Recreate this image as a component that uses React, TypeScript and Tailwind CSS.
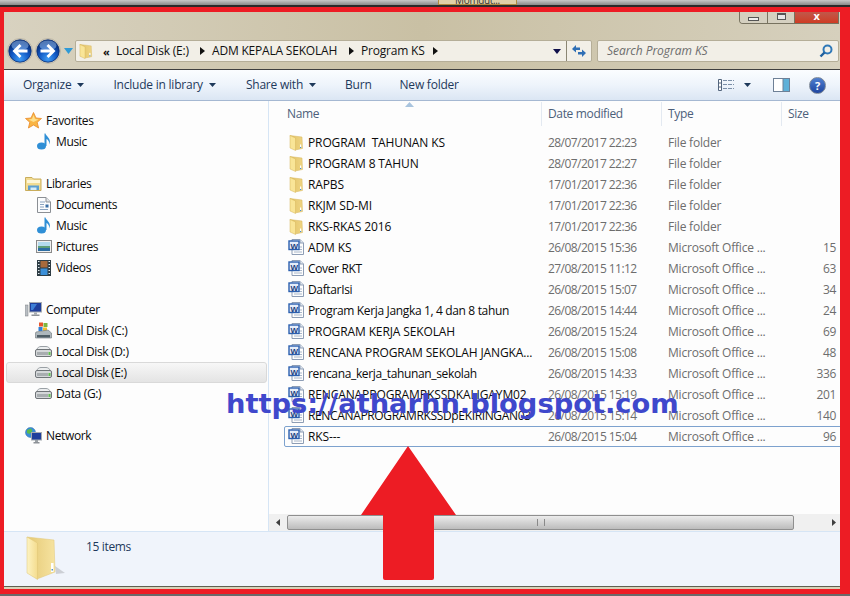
import { ReactNode } from 'react';

type FileRow = { name: string; date: string; type: string; size: string; folder?: boolean; selected?: boolean };

const files: FileRow[] = [
  { name: 'PROGRAM  TAHUNAN KS', date: '28/07/2017 22:23', type: 'File folder', size: '', folder: true },
  { name: 'PROGRAM 8 TAHUN', date: '28/07/2017 22:27', type: 'File folder', size: '', folder: true },
  { name: 'RAPBS', date: '17/01/2017 22:36', type: 'File folder', size: '', folder: true },
  { name: 'RKJM SD-MI', date: '17/01/2017 22:36', type: 'File folder', size: '', folder: true },
  { name: 'RKS-RKAS 2016', date: '17/01/2017 22:36', type: 'File folder', size: '', folder: true },
  { name: 'ADM KS', date: '26/08/2015 15:36', type: 'Microsoft Office ...', size: '15' },
  { name: 'Cover RKT', date: '27/08/2015 11:12', type: 'Microsoft Office ...', size: '63' },
  { name: 'DaftarIsi', date: '26/08/2015 15:07', type: 'Microsoft Office ...', size: '34' },
  { name: 'Program Kerja Jangka 1, 4 dan 8 tahun', date: '26/08/2015 14:44', type: 'Microsoft Office ...', size: '24' },
  { name: 'PROGRAM KERJA SEKOLAH', date: '26/08/2015 15:24', type: 'Microsoft Office ...', size: '69' },
  { name: 'RENCANA PROGRAM SEKOLAH JANGKA...', date: '26/08/2015 15:08', type: 'Microsoft Office ...', size: '48' },
  { name: 'rencana_kerja_tahunan_sekolah', date: '26/08/2015 14:33', type: 'Microsoft Office ...', size: '336' },
  { name: 'RENCANAPROGRAMRKSSDKALIGAYM02', date: '26/08/2015 15:19', type: 'Microsoft Office ...', size: '201' },
  { name: 'RENCANAPROGRAMRKSSDpEKIRINGAN03', date: '26/08/2015 15:14', type: 'Microsoft Office ...', size: '140' },
  { name: 'RKS---', date: '26/08/2015 15:04', type: 'Microsoft Office ...', size: '96', selected: true },
];

function FolderIcon({ size = 16 }: { size?: number }) {
  return (
    <svg width={size} height={size} viewBox="0 0 16 16">
      <defs>
        <linearGradient id="folderBack" x1="0" y1="0" x2="1" y2="0">
          <stop offset="0" stopColor="#e2c266" />
          <stop offset="1" stopColor="#efd583" />
        </linearGradient>
      </defs>
      <path d="M1 0.5 L13 2 L13.5 13.5 L6 15 Z" fill="url(#folderBack)" stroke="#d6b65c" strokeWidth="0.5" />
      <path d="M1 0.5 L6.5 3 V15.5 L1 13 Z" fill="#f9e597" stroke="#d6b65c" strokeWidth="0.5" />
      <rect x="11" y="9.5" width="1.2" height="3.5" fill="#fff" />
      <rect x="11" y="12" width="1.2" height="1" fill="#4a90d0" />
    </svg>
  );
}

function BigFolder() {
  return (
    <svg width="44" height="45" viewBox="0 0 44 45">
      <defs>
        <linearGradient id="bigBack" x1="0" y1="0" x2="1" y2="0">
          <stop offset="0" stopColor="#e5c975" />
          <stop offset="1" stopColor="#f6e3a0" />
        </linearGradient>
        <linearGradient id="bigFlap" x1="0" y1="0" x2="1" y2="0">
          <stop offset="0" stopColor="#fdf3c2" />
          <stop offset="1" stopColor="#f4dc8e" />
        </linearGradient>
      </defs>
      <path d="M29 30 L39 37 L30 38 Z" fill="#000" opacity="0.15" />
      <path d="M1 1 L28 4 L29 36 L11 43 Z" fill="url(#bigBack)" stroke="#e0c778" strokeWidth="0.5" />
      <path d="M1 1 L11.5 7 V43.5 L1 37 Z" fill="url(#bigFlap)" stroke="#dfc475" strokeWidth="0.5" />
      <rect x="25" y="27" width="2.5" height="9" fill="#fff" />
      <rect x="25.5" y="33" width="1.5" height="1.5" fill="#4a90d0" />
    </svg>
  );
}

function WordIcon() {
  return (
    <svg width="17" height="17" viewBox="0 0 17 17">
      <path d="M4 0.5 H12 L15.5 4 V15.5 H4 Z" fill="#fdfdfd" stroke="#8d9db5" />
      <path d="M12 0.5 V4 H15.5" fill="#dfe6ef" stroke="#8d9db5" />
      <path d="M11 8 H14 M11 10.5 H14 M6 13 H14" stroke="#a8b6c9" />
      <rect x="1" y="2" width="10" height="8.5" fill="#e6eefa" stroke="#2b5fae" strokeWidth="1.4" />
      <text x="6" y="9.5" fontSize="8" fontWeight="700" textAnchor="middle" fill="#1c3f80" fontFamily="Liberation Sans, sans-serif">W</text>
    </svg>
  );
}

function StarIcon() {
  return (
    <svg width="17" height="17" viewBox="0 0 17 17">
      <path d="M8.5 0.5 L11 6 L16.5 6.5 L12.2 10.3 L13.6 16 L8.5 13 L3.4 16 L4.8 10.3 L0.5 6.5 L6 6 Z" fill="#f9b544" stroke="#e98a2a" strokeWidth="0.8" />
      <path d="M8.5 3 L10 7 L13.5 7.5 L8.5 10 L3.5 7.5 L7 7 Z" fill="#fde08d" />
    </svg>
  );
}

function MusicIcon() {
  return (
    <svg width="14" height="17" viewBox="0 0 14 17">
      <ellipse cx="4.5" cy="13" rx="4.5" ry="3.6" fill="#2f8fd6" />
      <path d="M7.5 13 V0.5 H8.5 C9 3.5 14.5 5 12.5 11.5 C12.5 8 10.5 6.5 9.5 6 V13 Z" fill="#2f8fd6" />
    </svg>
  );
}

function LibraryIcon() {
  return (
    <svg width="17" height="15" viewBox="0 0 17 15">
      <path d="M0.5 1.5 H7 L8.5 3 H16 V14.5 H0.5 Z" fill="#f2dc92" stroke="#c9ad5c" />
      <rect x="2" y="4" width="13" height="3" fill="#fdf6d8" />
      <path d="M3 14 V9.5 H14 V14 Z" fill="#5d9fd0" />
      <path d="M5.5 14 V11.5 H11.5 V14 Z" fill="#d6ecf8" />
    </svg>
  );
}

function DocIcon() {
  return (
    <svg width="14" height="16" viewBox="0 0 14 16">
      <path d="M0.5 0.5 H9 L13.5 5 V15.5 H0.5 Z" fill="#fbfcfd" stroke="#8b8f94" />
      <path d="M9 0.5 V5 H13.5" fill="#e2e6ea" stroke="#8b8f94" />
      <path d="M3 5 H8 M3 7.5 H7 M3 10 H7 M3 12.5 H11" stroke="#8aa3bf" />
      <rect x="8.5" y="7.5" width="3" height="3" fill="#3b6ea5" />
    </svg>
  );
}

function PicturesIcon() {
  return (
    <svg width="16" height="13" viewBox="0 0 16 13">
      <rect x="0.5" y="0.5" width="15" height="12" fill="#f0f0f0" stroke="#8a8a8a" />
      <rect x="2" y="2" width="12" height="4" fill="#b4dbee" />
      <rect x="2" y="6" width="12" height="2" fill="#5f9f78" />
      <rect x="2" y="8" width="12" height="3" fill="#2d6ea3" />
    </svg>
  );
}

function VideosIcon() {
  return (
    <svg width="14" height="16" viewBox="0 0 14 16">
      <rect width="14" height="16" fill="#2f3d45" />
      <path d="M1 1.5 H2.5 M1 4.5 H2.5 M1 7.5 H2.5 M1 10.5 H2.5 M1 13.5 H2.5 M11.5 1.5 H13 M11.5 4.5 H13 M11.5 7.5 H13 M11.5 10.5 H13 M11.5 13.5 H13" stroke="#dfe9ee" />
      <rect x="3.5" y="1" width="7" height="6.5" fill="#a86a3c" />
      <rect x="3.5" y="8.5" width="7" height="6.5" fill="#3b8fd8" />
    </svg>
  );
}

function ComputerIcon() {
  return (
    <svg width="17" height="15" viewBox="0 0 17 15">
      <rect x="0" y="3" width="3" height="11" fill="#b9bec3" stroke="#7b8085" strokeWidth="0.5" />
      <rect x="4.5" y="0.5" width="12" height="9.5" fill="#1f3f9c" stroke="#a6abb0" />
      <path d="M6 2 H12 L8 8 H6 Z" fill="#3d7fd6" />
      <rect x="9" y="10.5" width="3" height="2" fill="#a6abb0" />
      <rect x="6.5" y="12.5" width="8" height="1.5" fill="#8d9297" />
    </svg>
  );
}

function DriveIcon() {
  return (
    <svg width="17" height="11" viewBox="0 0 17 11">
      <path d="M2 3.5 C2.5 1.5 4 0.5 6 0.5 H11 C13 0.5 14.5 1.5 15 3.5 Z" fill="#eceeef" stroke="#9aa0a5" />
      <rect x="0.5" y="3.5" width="16" height="7" rx="1.5" fill="#d4d7d9" stroke="#6f7478" />
      <rect x="2" y="6" width="11" height="3" fill="#a8adb0" />
      <rect x="13.5" y="6" width="2" height="3" fill="#5fc04d" />
    </svg>
  );
}

function SystemDriveIcon() {
  return (
    <svg width="17" height="17" viewBox="0 0 17 17">
      <rect x="4" y="0.5" width="4" height="4" fill="#e8562d" />
      <rect x="8.5" y="1" width="4" height="4" fill="#7fb53f" />
      <rect x="3.5" y="5" width="4" height="4" fill="#2f7fd6" />
      <rect x="8" y="5.5" width="4" height="4" fill="#f5c02c" />
      <path d="M1 10 L13 8 L16.5 11 V16 H0.5 V11 Z" fill="#aeb8bd" stroke="#6c7478" strokeWidth="0.6" />
      <rect x="2" y="13" width="13" height="2.5" fill="#4f5e66" />
    </svg>
  );
}

function NetworkIcon() {
  return (
    <svg width="17" height="17" viewBox="0 0 17 17">
      <circle cx="5.5" cy="5.5" r="5" fill="#3a8fd8" stroke="#2a6aa8" strokeWidth="0.5" />
      <path d="M2 3 L6 1.5 L7.5 4 L4.5 7 L2 6 Z" fill="#5cbb4c" />
      <rect x="6.5" y="5.5" width="10" height="7.5" fill="#1f3f9c" stroke="#a6abb0" />
      <rect x="10" y="13" width="3" height="2" fill="#9aa0a5" />
      <rect x="8.5" y="15" width="6" height="1.5" fill="#8d9297" />
    </svg>
  );
}

function NavRow({ icon, label, top, selected }: { icon: ReactNode; label: string; top?: boolean; selected?: boolean }) {
  return (
    <div
      className={`h-[21px] flex items-center text-[12px] text-[#0b0b0b] ${top ? 'pl-[21px]' : 'pl-[31px]'} ${
        selected ? 'ml-[2px] mr-[1px] rounded-[3px] border border-[#d9d9d9] bg-linear-to-b from-[#f7f7f7] to-[#e4e4e4]' : ''
      }`}
    >
      <span className={`flex items-center justify-center shrink-0 w-[17px] mr-[4px] ${selected ? '-ml-[3px]' : ''}`}>{icon}</span>
      <span>{label}</span>
    </div>
  );
}

function Sidebar() {
  return (
    <div className="w-[265px] shrink-0 border-r border-[#d6e5f5] pt-[9px] bg-[#fdfdfd]">
      <NavRow top icon={<StarIcon />} label="Favorites" />
      <NavRow icon={<MusicIcon />} label="Music" />
      <div className="h-[21px]" />
      <NavRow top icon={<LibraryIcon />} label="Libraries" />
      <NavRow icon={<DocIcon />} label="Documents" />
      <NavRow icon={<MusicIcon />} label="Music" />
      <NavRow icon={<PicturesIcon />} label="Pictures" />
      <NavRow icon={<VideosIcon />} label="Videos" />
      <div className="h-[21px]" />
      <NavRow top icon={<ComputerIcon />} label="Computer" />
      <NavRow icon={<SystemDriveIcon />} label="Local Disk (C:)" />
      <NavRow icon={<DriveIcon />} label="Local Disk (D:)" />
      <NavRow selected icon={<DriveIcon />} label="Local Disk (E:)" />
      <NavRow icon={<DriveIcon />} label="Data (G:)" />
      <div className="h-[21px]" />
      <NavRow top icon={<NetworkIcon />} label="Network" />
    </div>
  );
}

function HeaderCell({ label, width }: { label: string; width: string }) {
  return (
    <div className={`${width} shrink-0 h-[24px] pl-[6px] flex items-center border-r border-[#e3e9f1] text-[12px] text-[#4c607a]`}>
      {label}
    </div>
  );
}

function FileList() {
  return (
    <div className="flex-1 min-w-0 flex flex-col bg-[#fdfdfd] overflow-hidden relative">
      <div className="flex pl-[12px] h-[31px] items-start pt-[1px]">
        <HeaderCell label="Name" width="w-[261px]" />
        <HeaderCell label="Date modified" width="w-[120px]" />
        <HeaderCell label="Type" width="w-[120px]" />
        <div className="pl-[6px] h-[24px] flex items-center text-[12px] text-[#4c607a]">Size</div>
      </div>
      <svg width="9" height="5" viewBox="0 0 9 5" className="absolute left-[136px] top-[1px]">
        <path d="M4.5 0 L9 5 H0 Z" fill="#a9c4de" />
      </svg>
      <div className="flex-1 pl-[15px]">
        {files.map((f) => (
          <div
            key={f.name}
            className={`h-[21px] flex items-center text-[12px] w-[560px] ${
              f.selected ? 'border border-[#7da2ce] rounded-[2px]' : ''
            }`}
          >
            <span className={`w-[19px] mr-[1px] shrink-0 flex items-center justify-center ${f.selected ? 'ml-[2px]' : 'ml-[3px]'}`}>
              {f.folder ? <FolderIcon /> : <WordIcon />}
            </span>
            <span
              className={`w-[241px] shrink-0 pl-[1px] text-[#0b0b0b] whitespace-pre overflow-hidden ${
                f.name === f.name.toUpperCase() ? 'tracking-[-0.12px]' : 'tracking-[-0.35px]'
              }`}
            >
              {f.name}
            </span>
            <span className="w-[120px] shrink-0 text-[#6d6d6d] tracking-[-0.55px]">{f.date}</span>
            <span className="w-[120px] shrink-0 text-[#6d6d6d] tracking-[-0.2px]">{f.type}</span>
            <span className="w-[48px] shrink-0 text-right text-[#6d6d6d]">{f.size}</span>
          </div>
        ))}
      </div>
      <div className="h-[17px] flex bg-[#f0f0f0] items-center shrink-0">
        <div className="w-[18px] flex items-center justify-center">
          <svg width="4" height="7" viewBox="0 0 4 7"><path d="M4 0 V7 L0 3.5 Z" fill="#404040" /></svg>
        </div>
        <div className="w-[507px] h-[15px] rounded-[2px] border border-[#8f8f8f] bg-linear-to-b from-[#ececec] to-[#bcbcbc] flex items-center justify-center">
          <span className="w-[8px] h-[7px] border-x border-[#8a8a8a]" />
        </div>
        <div className="flex-1 flex items-center justify-end pr-[4px]">
          <svg width="4" height="7" viewBox="0 0 4 7"><path d="M0 0 V7 L4 3.5 Z" fill="#404040" /></svg>
        </div>
      </div>
    </div>
  );
}

function Crumb({ label, width }: { label: string; width: string }) {
  return (
    <div className={`${width} flex items-center shrink-0`}>
      <span className="text-[12px] text-[#111] tracking-[-0.2px]">{label}</span>
      <svg width="5" height="8" viewBox="0 0 5 8" className="ml-auto mr-[7px]"><path d="M0 0 L5 4 L0 8 Z" fill="#111" /></svg>
    </div>
  );
}

function NavButton({ dir }: { dir: 'back' | 'forward' }) {
  return (
    <svg width="26" height="26" viewBox="0 0 26 26" className="shrink-0">
      <defs>
        <radialGradient id="navFill" cx="0.5" cy="0.85" r="0.75">
          <stop offset="0" stopColor="#3f9cf5" />
          <stop offset="0.55" stopColor="#0f56c2" />
          <stop offset="1" stopColor="#06296f" />
        </radialGradient>
      </defs>
      <circle cx="13" cy="13" r="12.5" fill="#d9d4c4" stroke="#a7a393" strokeWidth="0.6" />
      <circle cx="13" cy="13" r="11.2" fill="url(#navFill)" stroke="#0a2f73" strokeWidth="0.8" />
      <ellipse cx="13" cy="7.5" rx="8.5" ry="5" fill="#8fbcf0" opacity="0.55" />
      <g transform={dir === 'forward' ? 'rotate(180 13 13)' : undefined}>
        <path d="M12.5 6 L5.5 13 L12.5 20 L14.5 18 L11 14.5 H20.5 V11.5 H11 L14.5 8 Z" fill="#fff" />
      </g>
    </svg>
  );
}

function WindowChrome() {
  return (
    <div className="h-[58px] shrink-0 bg-linear-to-r from-[#d8d2c0] via-[#c9c0a4] to-[#d6d0bd] border-b border-[#3f3f3f]">
      <div className="h-[12px] flex justify-end">
        <div className="flex w-[100px] h-[12px] mr-[1px] rounded-bl-[4px] border border-t-0 border-[#77725f] overflow-hidden">
          <div className="w-[28px] border-r border-[#77725f] bg-[#d5d0c0] flex items-center justify-center">
            <span className="w-[11px] h-[4px] mt-[3px] bg-[#eee] border border-[#555]" />
          </div>
          <div className="w-[27px] border-r border-[#77725f] bg-[#d5d0c0] flex items-center justify-center">
            <span className="w-[9px] h-[7px] -mt-[3px] border border-[#555] border-t-2 bg-[#e8e8e8]" />
          </div>
          <div className="flex-1 bg-linear-to-b from-[#c0584a] to-[#cf3b22] flex items-start justify-center">
            <span className="text-[11px] leading-[8px] font-bold text-white">x</span>
          </div>
        </div>
      </div>
      <div className="h-[15px]" />
      <div className="h-[24px] flex items-center pl-[3px]">
        <NavButton dir="back" />
        <div className="w-[2px]" />
        <NavButton dir="forward" />
        <svg width="9" height="6" viewBox="0 0 9 6" className="ml-[3px] mr-[2px] shrink-0"><path d="M0 0 H9 L4.5 6 Z" fill="#2f9ad6" /></svg>
        <div className="w-[517px] h-[22px] shrink-0 flex items-center bg-[#f2efe7] border border-[#b5ae98] rounded-[2px] pl-[3px]">
          <FolderIcon size={15} />
          <span className="text-[11px] ml-[9px] w-[13px] font-bold leading-none text-[#111]">«</span>
          <Crumb label="Local Disk (E:)" width="w-[96px]" />
          <Crumb label="ADM KEPALA SEKOLAH" width="w-[149px]" />
          <Crumb label="Program KS" width="w-[84px]" />
          <div className="flex-1" />
          <svg width="8" height="5" viewBox="0 0 8 5" className="mr-[5px]"><path d="M0 0 H8 L4 5 Z" fill="#10104a" /></svg>
          <div className="w-[25px] h-full border-l border-[#8b8673] flex items-center justify-center">
            <svg width="16" height="14" viewBox="0 0 16 14">
              <path d="M1 5 L5 1 V3.5 H9 V6 H5 V8.5 Z" fill="#2f6fb5" />
              <path d="M15 9 L11 13 V10.5 H7 V8 H11 V5.5 Z" fill="#2f6fb5" />
            </svg>
          </div>
        </div>
        <div className="w-[5px]" />
        <div className="w-[242px] h-[22px] shrink-0 flex items-center bg-[#f2efe7] border border-[#b5ae98] rounded-[2px] pl-[9px] pr-[5px]">
          <span className="text-[12px] italic text-[#6d6d6d] tracking-[-0.05px]">Search Program KS</span>
          <svg width="14" height="14" viewBox="0 0 14 14" className="ml-auto">
            <circle cx="8.5" cy="5.5" r="4" fill="none" stroke="#2f78b8" strokeWidth="2" />
            <path d="M5.5 8.5 L1.5 12.5" stroke="#1f5f9e" strokeWidth="2.4" />
          </svg>
        </div>
      </div>
    </div>
  );
}

function ToolItem({ label, arrow, ml }: { label: string; arrow?: boolean; ml: string }) {
  return (
    <div className={`${ml} flex items-center text-[12px] text-[#1e395b] shrink-0 tracking-[-0.22px]`}>
      <span>{label}</span>
      {arrow && (
        <svg width="7" height="4" viewBox="0 0 7 4" className="ml-[6px]"><path d="M0 0 H7 L3.5 4 Z" fill="#1e395b" /></svg>
      )}
    </div>
  );
}

function Toolbar() {
  return (
    <div className="h-[31px] shrink-0 flex items-center bg-linear-to-b from-[#fbfdff] via-[#eef4fb] to-[#dbe6f4] border-b border-[#a5b8d2] pr-[14px]">
      <ToolItem label="Organize" arrow ml="ml-[19px]" />
      <ToolItem label="Include in library" arrow ml="ml-[29px]" />
      <ToolItem label="Share with" arrow ml="ml-[30px]" />
      <ToolItem label="Burn" ml="ml-[29px]" />
      <ToolItem label="New folder" ml="ml-[28px]" />
      <div className="flex-1" />
      <svg width="16" height="12" viewBox="0 0 16 12">
        <path d="M5 1.5 H16 M5 5.5 H16 M5 9.5 H16" stroke="#7b8fa8" strokeDasharray="4 1" />
        <path d="M0.5 0.5 H3.5 V11.5 H0.5 Z M0.5 4 H3.5 M0.5 8 H3.5" fill="#fff" stroke="#53657d" />
      </svg>
      <svg width="7" height="4" viewBox="0 0 7 4" className="ml-[10px]"><path d="M0 0 H7 L3.5 4 Z" fill="#1e395b" /></svg>
      <svg width="17" height="14" viewBox="0 0 17 14" className="ml-[22px]">
        <rect x="0.5" y="0.5" width="16" height="13" fill="#fff" stroke="#6e8096" />
        <rect x="10" y="1" width="6" height="12" fill="#5fb0d8" />
        <path d="M10 0.5 V13.5" stroke="#6e8096" />
      </svg>
      <div className="ml-[19px] w-[17px] h-[17px] rounded-full border border-[#7c8796] bg-linear-to-b from-[#4f7fd0] to-[#1f45a0] flex items-center justify-center text-[11px] font-bold leading-none text-white">?</div>
    </div>
  );
}

function StatusBar() {
  return (
    <div className="h-[58px] shrink-0 flex flex-col bg-[#f0f4fb] border-t border-[#d6e5f5]">
      <div className="flex-1 flex">
        <div className="ml-[22px] mt-[4px]">
          <BigFolder />
        </div>
        <span className="ml-[16px] mt-[6px] text-[12px] text-[#1e395b]">15 items</span>
      </div>
      <div className="h-[3px] border-t border-[#5f5f50] bg-[#d8d2b8]" />
    </div>
  );
}

export default function App() {
  return (
    <div className="w-[850px] h-[596px] relative overflow-hidden bg-[#6a6a6a] tracking-[-0.35px] font-['Open_Sans','Noto_Sans',sans-serif]">
      <div className="h-[7px] relative bg-linear-to-b from-[#c8c8c8] to-[#8a8a8a] border-b-2 border-[#2a2a2a]">
        <div className="absolute left-[438px] top-0 w-[79px] h-[5px] bg-[#e0d0a8] border-x border-b border-[#b08c40] overflow-hidden text-[10px] leading-[0px] text-center text-[#333]">
          Momdut...
        </div>
      </div>
      <div className="h-[587px] flex flex-col border-solid border-[#ed1c24] border-t-[5px] border-l-[4px] border-r-[10px] border-b-[5px] bg-[#ece9d8]">
        <WindowChrome />
        <Toolbar />
        <div className="flex-1 min-h-0 flex">
          <Sidebar />
          <FileList />
        </div>
        <StatusBar />
      </div>

      <div className="absolute left-[226px] top-[386px] text-[27.3px] leading-[36px] tracking-normal font-bold text-[#3f48cc] whitespace-nowrap font-['DejaVu_Sans',sans-serif]">
        https://atharhn.blogspot.com
      </div>
      <svg width="97" height="135" viewBox="0 0 97 135" className="absolute left-[360px] top-[446px]">
        <path d="M48 0 L96 69 H74 V132 Q74 134 72 134 H25 Q23 134 23 132 V69 H1 Z" fill="#ed1c24" />
      </svg>
    </div>
  );
}
